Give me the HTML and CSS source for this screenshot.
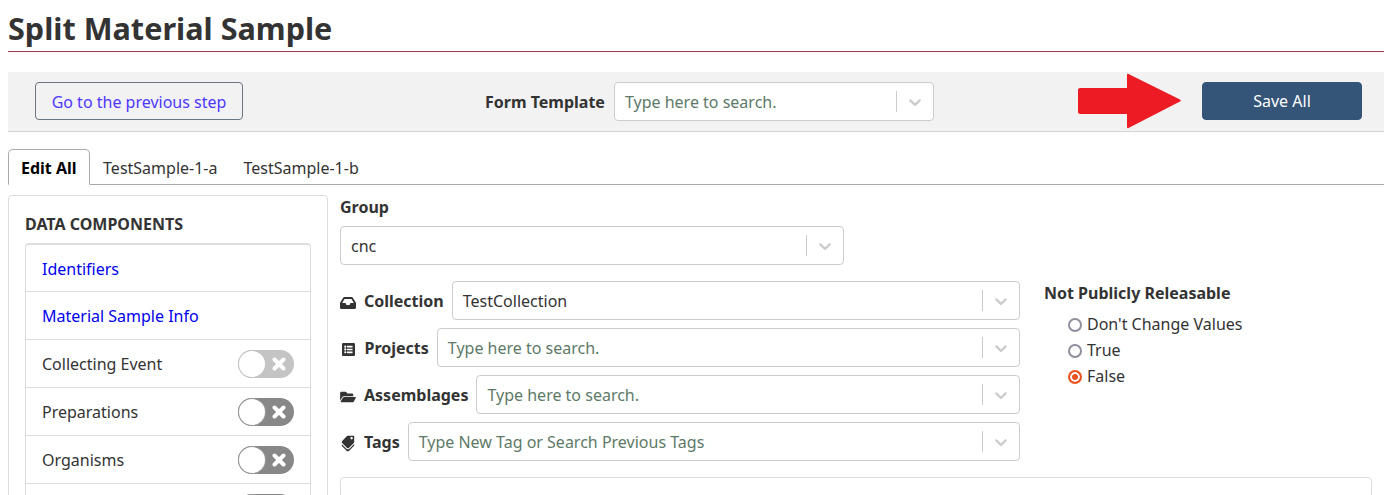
FILE: index.html
```html
<!DOCTYPE html>
<html lang="en">
<head>
    <meta charset="UTF-8">
    <meta name="viewport" content="width=device-width, initial-scale=1.0">
    <title>Split Material Sample</title>
    <link rel="stylesheet" href="styles.css">
</head>
<body>
    <div class="page">
        <h1>Split Material Sample</h1>

        <div class="button-bar">
            <a class="btn-prev" href="#">Go to the previous step</a>
            <div class="template">
                <label>Form Template</label>
                <div class="select template-select">
                    <span class="select-value placeholder">Type here to search.</span>
                    <span class="select-sep"></span>
                    <svg class="chevron" viewBox="0 0 20 20"><path d="M4.516 7.548c.436-.446 1.043-.481 1.576 0L10 11.295l3.908-3.747c.533-.481 1.141-.446 1.574 0 .436.445.408 1.197 0 1.615-.406.418-4.695 4.502-4.695 4.502a1.095 1.095 0 0 1-1.576 0S4.924 9.581 4.516 9.163c-.409-.418-.436-1.17 0-1.615z"/></svg>
                </div>
            </div>
            <div class="save-group">
                <svg class="arrow" viewBox="0 0 104 56"><path d="M2 15h47V2c0-1 .6-1.500 1.500-1L102 26.500c1 .6 1 1.400 0 2L50.500 55c-.9.500-1.500 0-1.500-1V41H2c-1 0-2-.8-2-2V17c0-1.200 1-2 2-2z"/></svg>
                <button class="btn-save">Save All</button>
            </div>
        </div>

        <ul class="tabs">
            <li class="tab active">Edit All</li>
            <li class="tab">TestSample-1-a</li>
            <li class="tab">TestSample-1-b</li>
        </ul>

        <div class="main">
            <div class="sidebar">
                <h2>DATA COMPONENTS</h2>
                <div class="component-list">
                    <div class="component"><a href="#">Identifiers</a></div>
                    <div class="component"><a href="#">Material Sample Info</a></div>
                    <div class="component">
                        <span>Collecting Event</span>
                        <span class="toggle light">
                            <svg class="toggle-x" viewBox="0 0 14 14"><path d="M2.500 2.500l9 9M11.500 2.500l-9 9"/></svg>
                            <span class="thumb"></span>
                        </span>
                    </div>
                    <div class="component">
                        <span>Preparations</span>
                        <span class="toggle">
                            <svg class="toggle-x" viewBox="0 0 14 14"><path d="M2.500 2.500l9 9M11.500 2.500l-9 9"/></svg>
                            <span class="thumb"></span>
                        </span>
                    </div>
                    <div class="component">
                        <span>Organisms</span>
                        <span class="toggle">
                            <svg class="toggle-x" viewBox="0 0 14 14"><path d="M2.500 2.500l9 9M11.500 2.500l-9 9"/></svg>
                            <span class="thumb"></span>
                        </span>
                    </div>
                    <div class="component last">
                        <span></span>
                        <span class="toggle">
                            <svg class="toggle-x" viewBox="0 0 14 14"><path d="M2.500 2.500l9 9M11.500 2.500l-9 9"/></svg>
                            <span class="thumb"></span>
                        </span>
                    </div>
                </div>
            </div>

            <div class="content">
                <div class="group-field">
                    <label>Group</label>
                    <div class="select">
                        <span class="select-value">cnc</span>
                        <span class="select-sep"></span>
                        <svg class="chevron" viewBox="0 0 20 20"><path d="M4.516 7.548c.436-.446 1.043-.481 1.576 0L10 11.295l3.908-3.747c.533-.481 1.141-.446 1.574 0 .436.445.408 1.197 0 1.615-.406.418-4.695 4.502-4.695 4.502a1.095 1.095 0 0 1-1.576 0S4.924 9.581 4.516 9.163c-.409-.418-.436-1.17 0-1.615z"/></svg>
                    </div>
                </div>

                <div class="fields">
                    <div class="field-rows">
                        <div class="field-row">
                            <span class="field-icon"><svg class="icon-inbox" viewBox="0 0 576 512" preserveAspectRatio="none"><path d="M567.938 243.908L462.25 85.374A48.003 48.003 0 0 0 422.311 64H153.689a48 48 0 0 0-39.938 21.374L8.062 243.908A47.994 47.994 0 0 0 0 270.533V400c0 26.51 21.49 48 48 48h480c26.51 0 48-21.49 48-48V270.533a47.994 47.994 0 0 0-8.062-26.625zM162.252 128h251.497l85.333 128H376l-32 64H232l-32-64H76.918l85.334-128z"/></svg></span>
                            <label>Collection</label>
                            <div class="select">
                                <span class="select-value">TestCollection</span>
                                <span class="select-sep"></span>
                                <svg class="chevron" viewBox="0 0 20 20"><path d="M4.516 7.548c.436-.446 1.043-.481 1.576 0L10 11.295l3.908-3.747c.533-.481 1.141-.446 1.574 0 .436.445.408 1.197 0 1.615-.406.418-4.695 4.502-4.695 4.502a1.095 1.095 0 0 1-1.576 0S4.924 9.581 4.516 9.163c-.409-.418-.436-1.17 0-1.615z"/></svg>
                            </div>
                        </div>
                        <div class="field-row">
                            <span class="field-icon projects-icon"><svg class="icon-list" viewBox="0 0 512 512" preserveAspectRatio="none"><path d="M464 32H48C21.49 32 0 53.49 0 80v352c0 26.51 21.49 48 48 48h416c26.51 0 48-21.49 48-48V80c0-26.51-21.49-48-48-48zM128 120c22.091 0 40 17.909 40 40s-17.909 40-40 40-40-17.909-40-40 17.909-40 40-40zm0 96c22.091 0 40 17.909 40 40s-17.909 40-40 40-40-17.909-40-40 17.909-40 40-40zm0 96c22.091 0 40 17.909 40 40s-17.909 40-40 40-40-17.909-40-40 17.909-40 40-40zm288-136v-32c0-6.627-5.373-12-12-12H204c-6.627 0-12 5.373-12 12v32c0 6.627 5.373 12 12 12h200c6.627 0 12-5.373 12-12zm0 96v-32c0-6.627-5.373-12-12-12H204c-6.627 0-12 5.373-12 12v32c0 6.627 5.373 12 12 12h200c6.627 0 12-5.373 12-12zm0 96v-32c0-6.627-5.373-12-12-12H204c-6.627 0-12 5.373-12 12v32c0 6.627 5.373 12 12 12h200c6.627 0 12-5.373 12-12z"/></svg></span>
                            <label>Projects</label>
                            <div class="select">
                                <span class="select-value placeholder">Type here to search.</span>
                                <span class="select-sep"></span>
                                <svg class="chevron" viewBox="0 0 20 20"><path d="M4.516 7.548c.436-.446 1.043-.481 1.576 0L10 11.295l3.908-3.747c.533-.481 1.141-.446 1.574 0 .436.445.408 1.197 0 1.615-.406.418-4.695 4.502-4.695 4.502a1.095 1.095 0 0 1-1.576 0S4.924 9.581 4.516 9.163c-.409-.418-.436-1.17 0-1.615z"/></svg>
                            </div>
                        </div>
                        <div class="field-row">
                            <span class="field-icon"><svg class="icon-folder" viewBox="0 0 576 512"><path d="M572.694 292.093L500.27 416.248A63.997 63.997 0 0 1 444.989 448H45.025c-18.523 0-30.064-20.093-20.731-36.093l72.424-124.155A64 64 0 0 1 152 256h399.964c18.523 0 30.064 20.093 20.73 36.093zM152 224h328v-48c0-26.51-21.49-48-48-48H272l-64-64H48C21.49 64 0 85.49 0 112v278.046l69.077-118.418C86.214 242.25 117.989 224 152 224z"/></svg></span>
                            <label>Assemblages</label>
                            <div class="select">
                                <span class="select-value placeholder">Type here to search.</span>
                                <span class="select-sep"></span>
                                <svg class="chevron" viewBox="0 0 20 20"><path d="M4.516 7.548c.436-.446 1.043-.481 1.576 0L10 11.295l3.908-3.747c.533-.481 1.141-.446 1.574 0 .436.445.408 1.197 0 1.615-.406.418-4.695 4.502-4.695 4.502a1.095 1.095 0 0 1-1.576 0S4.924 9.581 4.516 9.163c-.409-.418-.436-1.17 0-1.615z"/></svg>
                            </div>
                        </div>
                        <div class="field-row">
                            <span class="field-icon"><svg class="icon-tags" viewBox="0 0 640 512"><path d="M497.941 225.941L286.059 14.059A48 48 0 0 0 252.118 0H48C21.49 0 0 21.49 0 48v204.118a48 48 0 0 0 14.059 33.941l211.882 211.882c18.744 18.745 49.136 18.746 67.882 0l204.118-204.118c18.745-18.745 18.745-49.137 0-67.882zM112 160c-26.51 0-48-21.49-48-48s21.49-48 48-48 48 21.49 48 48-21.49 48-48 48zm513.941 133.823L421.823 497.941c-18.745 18.745-49.137 18.745-67.882 0l-.36-.36L527.64 323.522c16.999-16.999 26.36-39.6 26.36-63.64s-9.362-46.641-26.36-63.64L331.397 0h48.721a48 48 0 0 1 33.941 14.059l211.882 211.882c18.745 18.745 18.745 49.137 0 67.882z"/></svg></span>
                            <label>Tags</label>
                            <div class="select">
                                <span class="select-value placeholder">Type New Tag or Search Previous Tags</span>
                                <span class="select-sep"></span>
                                <svg class="chevron" viewBox="0 0 20 20"><path d="M4.516 7.548c.436-.446 1.043-.481 1.576 0L10 11.295l3.908-3.747c.533-.481 1.141-.446 1.574 0 .436.445.408 1.197 0 1.615-.406.418-4.695 4.502-4.695 4.502a1.095 1.095 0 0 1-1.576 0S4.924 9.581 4.516 9.163c-.409-.418-.436-1.17 0-1.615z"/></svg>
                            </div>
                        </div>
                    </div>

                    <div class="release">
                        <div class="release-title">Not Publicly Releasable</div>
                        <div class="radio"><span class="radio-dot"></span>Don't Change Values</div>
                        <div class="radio"><span class="radio-dot"></span>True</div>
                        <div class="radio"><span class="radio-dot checked"></span>False</div>
                    </div>
                </div>

                <div class="lower-panel"></div>
            </div>
        </div>
    </div>
</body>
</html>
```

FILE: styles.css
```css
* {
    box-sizing: border-box;
}
html, body {
    margin: 0;
    padding: 0;
    background-color: #fff;
}
body {
    font-family: "Noto Sans", sans-serif;
    font-size: 16px;
    line-height: 24px;
    color: #333;
}
.page {
    height: 495px;
    padding: 0 7px 0 8px;
    overflow: hidden;
}
h1 {
    margin: 0;
    height: 52px;
    padding-top: 7px;
    font-size: 30.6px;
    line-height: 42px;
    font-weight: 700;
    color: #333;
    border-bottom: 1px solid #a03c48;
}

/* top bar */
.button-bar {
    display: flex;
    align-items: flex-start;
    height: 60px;
    margin-top: 20px;
    padding: 10px 22px 0 27px;
    background-color: #f2f2f2;
    border-bottom: 1px solid #d4d4d4;
}
.btn-prev {
    width: 208px;
    height: 38px;
    line-height: 38px;
    text-align: center;
    text-decoration: none;
    color: #4f39ff;
    border: 1px solid #6c757d;
    border-radius: 4px;
}
.template {
    display: flex;
    align-items: center;
    margin-left: 242px;
}
.template label {
    margin-right: 9px;
}
.template-select {
    width: 320px;
}
label,
.release-title {
    font-weight: 700;
    white-space: nowrap;
}
.save-group {
    display: flex;
    align-items: flex-start;
    margin-left: auto;
}
.arrow {
    display: block;
    width: 104px;
    height: 56px;
    margin: -9px 20px 0 0;
    fill: #ed1c24;
}
.btn-save {
    width: 160px;
    height: 38px;
    padding: 0;
    font-family: inherit;
    font-size: 16px;
    color: #fff;
    background-color: #345478;
    border: 1px solid #345478;
    border-radius: 4px;
}

/* react-select look */
.select {
    display: flex;
    align-items: center;
    flex: 1;
    height: 39px;
    background-color: #fff;
    border: 1px solid #ccc;
    border-radius: 4px;
}
.select-value {
    flex: 1;
    padding-left: 10px;
    white-space: nowrap;
}
.placeholder {
    color: #5d7a68;
}
.select-sep {
    width: 1px;
    height: 21px;
    background-color: #ccc;
}
.chevron {
    width: 20px;
    height: 20px;
    margin: 0 8px;
    fill: #ccc;
}

/* tabs */
.tabs {
    display: flex;
    height: 36px;
    margin: 17px 0 0;
    padding: 0;
    list-style: none;
    border-bottom: 1px solid #aaa;
}
.tab {
    height: 36px;
    padding: 6px 12px;
    color: #333;
    border: 1px solid transparent;
}
.tab.active {
    margin-right: 0.5px;
    font-weight: 700;
    color: #000;
    background-color: #fff;
    border-color: #aaa #aaa #fff;
    border-radius: 5px 5px 0 0;
}

/* main area */
.main {
    display: flex;
    align-items: flex-start;
    margin-top: 10px;
}
.sidebar {
    flex: none;
    width: 320px;
    padding: 16px;
    border: 1px solid #ddd;
    border-radius: 4px;
}
.sidebar h2 {
    margin: 0 0 7px;
    font-size: 16px;
    line-height: 24px;
    font-weight: 700;
}
.component-list {
    border: 1px solid #ddd;
    border-top-width: 2px;
    border-radius: 4px;
}
.component {
    display: flex;
    align-items: center;
    justify-content: space-between;
    height: 48px;
    padding: 0 16px;
    border-bottom: 1px solid #ddd;
}
.component:first-child {
    height: 47px;
    padding-top: 2px;
}
.component.last {
    border-bottom: 0;
}
.component a {
    color: #0000ee;
    text-decoration: none;
}
.toggle {
    position: relative;
    display: block;
    width: 56px;
    height: 28px;
    background-color: #888;
    border-radius: 14px;
}
.toggle.light {
    background-color: #c4c4c4;
}
.thumb {
    position: absolute;
    top: 1px;
    left: 1px;
    width: 26px;
    height: 26px;
    background-color: #fff;
    border-radius: 50%;
    box-shadow: 0 0 0 1px #999;
}
.toggle.light .thumb {
    box-shadow: 0 0 0 1px #c4c4c4;
}
.toggle-x {
    position: absolute;
    top: 7px;
    right: 8px;
    width: 14px;
    height: 14px;
    fill: none;
    stroke: #fff;
    stroke-width: 4;
    stroke-linecap: round;
}

/* form side */
.content {
    flex: 1;
    min-width: 0;
    padding: 0 12px;
}
.group-field label {
    display: block;
    margin-bottom: 7px;
}
.group-field .select {
    width: 504px;
    flex: none;
}
.fields {
    display: flex;
    margin-top: 16px;
}
.field-rows {
    flex: none;
    width: 680px;
}
.field-row {
    display: flex;
    align-items: center;
    margin-bottom: 8px;
}
.field-row label {
    margin-right: 8px;
}
.field-icon {
    display: flex;
    align-items: center;
    flex: none;
    width: 24px;
    height: 16px;
    margin-top: 4px;
}
.projects-icon {
    width: 24.5px;
}
.field-icon svg {
    display: block;
    flex: none;
    fill: #333;
}
.icon-inbox {
    width: 16px;
    height: 16px;
}
.icon-folder {
    width: 16px;
    height: 14px;
}
.icon-list {
    width: 13px;
    height: 15px;
    margin-left: 2px;
    fill-rule: evenodd;
}
.icon-tags {
    width: 16px;
    height: 13px;
    transform: rotate(90deg);
}
.release {
    margin-left: 24px;
}
.release-title {
    margin-bottom: 6px;
}
.radio {
    display: flex;
    align-items: center;
    height: 26px;
    padding-left: 24px;
    white-space: nowrap;
}
.radio-dot {
    flex: none;
    width: 14px;
    height: 14px;
    margin: 2px 5px 0 0;
    background-color: #fff;
    border: 2px solid #8f8f9d;
    border-radius: 50%;
}
.radio-dot.checked {
    border-color: #e95420;
    box-shadow: inset 0 0 0 2px #fff;
    background-color: #e95420;
}
.lower-panel {
    height: 60px;
    margin-top: 8px;
    border: 1px solid #ddd;
    border-radius: 4px;
}
```
